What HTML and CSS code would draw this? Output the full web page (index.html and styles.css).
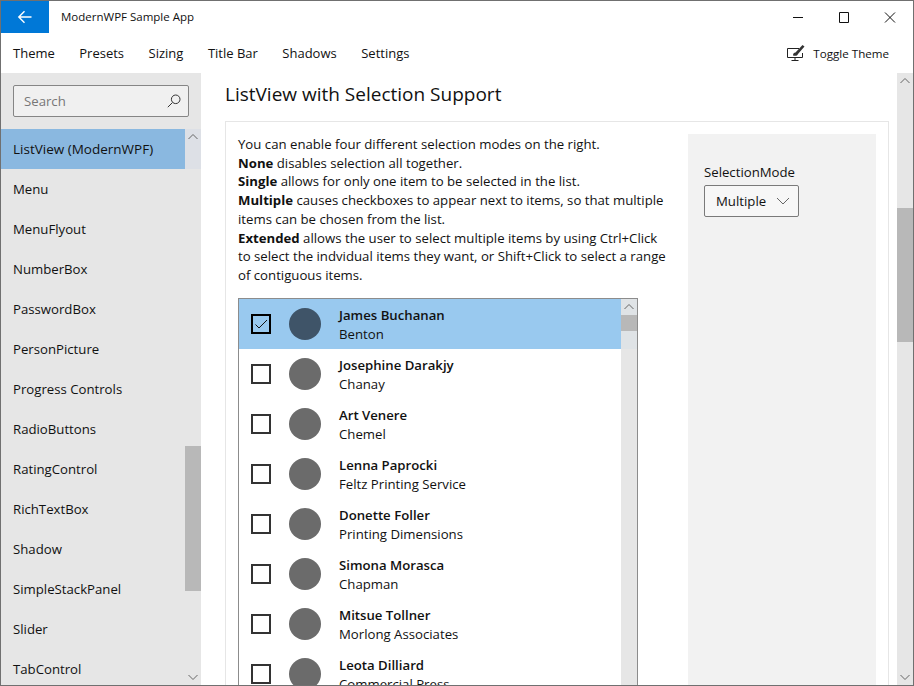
FILE: index.html
```html
<!DOCTYPE html>
<html lang="en">
<head>
    <meta charset="UTF-8">
    <title>ModernWPF Sample App</title>
    <link rel="stylesheet" href="styles.css">
</head>
<body>

<div class="window">
    <div class="titlebar">
        <div class="back-btn">
            <svg width="16" height="16" viewBox="0 0 16 16"><path d="M14.500 8H2M7.500 2.300L1.800 8l5.700 5.700" fill="none" stroke="#fff" stroke-width="1.400"/></svg>
        </div>
        <div class="app-title">ModernWPF Sample App</div>
        <div class="caption-btns">
            <svg class="caption-btn" width="46" height="32" viewBox="0 0 46 32"><path d="M18 16.500h10" stroke="#111" fill="none"/></svg>
            <svg class="caption-btn" width="46" height="32" viewBox="0 0 46 32"><path d="M18.500 11.500h9v10h-9z" stroke="#111" fill="none"/></svg>
            <svg class="caption-btn" width="46" height="32" viewBox="0 0 46 32"><path d="M18 11.500l10 10M28 11.500l-10 10" stroke="#111" fill="none"/></svg>
        </div>
    </div>

    <div class="menubar">
        <span class="menu-item">Theme</span>
        <span class="menu-item">Presets</span>
        <span class="menu-item">Sizing</span>
        <span class="menu-item">Title Bar</span>
        <span class="menu-item">Shadows</span>
        <span class="menu-item">Settings</span>
        <div class="toggle-theme">
            <svg width="20" height="18" viewBox="0 0 20 18"><path d="M13 4.500H1.500v9h15V9M9 13.500v3M5.500 16.500h7" fill="none" stroke="#222"/><path d="M7 11.500c0-2 1-3 2.500-3L16.500 1l2 1.500-6.500 7.500c-.5 2-3 2-5 1.500z" fill="#333"/></svg>
            <span>Toggle Theme</span>
        </div>
    </div>

    <div class="content">
        <div class="sidebar">
            <div class="search-wrap">
                <div class="search-box">
                    <span>Search</span>
                    <svg width="14" height="14" viewBox="0 0 14 14"><circle cx="8.700" cy="5.300" r="4.300" fill="none" stroke="#333"/><path d="M5.500 8.500L.8 13.200" stroke="#333" fill="none"/></svg>
                </div>
            </div>
            <div class="nav-area">
                <div class="nav-list">
                    <div class="nav-item selected">ListView (ModernWPF)</div>
                    <div class="nav-item">Menu</div>
                    <div class="nav-item">MenuFlyout</div>
                    <div class="nav-item">NumberBox</div>
                    <div class="nav-item">PasswordBox</div>
                    <div class="nav-item">PersonPicture</div>
                    <div class="nav-item">Progress Controls</div>
                    <div class="nav-item">RadioButtons</div>
                    <div class="nav-item">RatingControl</div>
                    <div class="nav-item">RichTextBox</div>
                    <div class="nav-item">Shadow</div>
                    <div class="nav-item">SimpleStackPanel</div>
                    <div class="nav-item">Slider</div>
                    <div class="nav-item">TabControl</div>
                </div>
                <div class="scrollbar nav-scroll">
                    <svg class="arrow" width="16" height="16" viewBox="0 0 16 16"><path d="M3.500 10L8 5.500l4.500 4.500" fill="none" stroke="#666"/></svg>
                    <div class="track"><div class="thumb nav-thumb"></div></div>
                    <svg class="arrow" width="16" height="16" viewBox="0 0 16 16"><path d="M3.500 6L8 10.500 12.500 6" fill="none" stroke="#666"/></svg>
                </div>
            </div>
        </div>

        <div class="main">
            <h1 class="page-title">ListView with Selection Support</h1>
            <div class="card">
                <div class="card-left">
                    <p class="intro">
                        You can enable four different selection modes on the right.<br>
                        <b>None</b> disables selection all together.<br>
                        <b>Single</b> allows for only one item to be selected in the list.<br>
                        <b>Multiple</b> causes checkboxes to appear next to items, so that multiple<br>
                        items can be chosen from the list.<br>
                        <b>Extended</b> allows the user to select multiple items by using Ctrl+Click<br>
                        to select the indvidual items they want, or Shift+Click to select a range<br>
                        of contiguous items.
                    </p>
                    <div class="listbox">
                        <div class="rows">
                            <div class="row selected">
                                <div class="check"><svg width="16" height="16" viewBox="0 0 16 16"><path d="M2.500 8.500l3.500 3.500 8-8" fill="none" stroke="#111"/></svg></div>
                                <div class="avatar"></div>
                                <div class="person"><div class="name">James Buchanan</div><div class="company">Benton</div></div>
                            </div>
                            <div class="row">
                                <div class="check"></div><div class="avatar"></div>
                                <div class="person"><div class="name">Josephine Darakjy</div><div class="company">Chanay</div></div>
                            </div>
                            <div class="row">
                                <div class="check"></div><div class="avatar"></div>
                                <div class="person"><div class="name">Art Venere</div><div class="company">Chemel</div></div>
                            </div>
                            <div class="row">
                                <div class="check"></div><div class="avatar"></div>
                                <div class="person"><div class="name">Lenna Paprocki</div><div class="company">Feltz Printing Service</div></div>
                            </div>
                            <div class="row">
                                <div class="check"></div><div class="avatar"></div>
                                <div class="person"><div class="name">Donette Foller</div><div class="company">Printing Dimensions</div></div>
                            </div>
                            <div class="row">
                                <div class="check"></div><div class="avatar"></div>
                                <div class="person"><div class="name">Simona Morasca</div><div class="company">Chapman</div></div>
                            </div>
                            <div class="row">
                                <div class="check"></div><div class="avatar"></div>
                                <div class="person"><div class="name">Mitsue Tollner</div><div class="company">Morlong Associates</div></div>
                            </div>
                            <div class="row">
                                <div class="check"></div><div class="avatar"></div>
                                <div class="person"><div class="name">Leota Dilliard</div><div class="company">Commercial Press</div></div>
                            </div>
                        </div>
                        <div class="scrollbar list-scroll">
                            <svg class="arrow" width="16" height="16" viewBox="0 0 16 16"><path d="M3.500 10L8 5.500l4.500 4.500" fill="none" stroke="#666"/></svg>
                            <div class="track"><div class="thumb list-thumb"></div></div>
                        </div>
                    </div>
                </div>
                <div class="options">
                    <div class="options-label">SelectionMode</div>
                    <div class="combo">
                        <span>Multiple</span>
                        <svg width="14" height="10" viewBox="0 0 14 10"><path d="M1 2l6 6 6-6" fill="none" stroke="#666"/></svg>
                    </div>
                </div>
            </div>
        </div>

        <div class="scrollbar main-scroll">
            <svg class="arrow" width="16" height="16" viewBox="0 0 16 16"><path d="M3.500 10L8 5.500l4.500 4.500" fill="none" stroke="#666"/></svg>
            <div class="track"><div class="thumb main-thumb"></div></div>
            <svg class="arrow" width="16" height="16" viewBox="0 0 16 16"><path d="M3.500 6L8 10.500 12.500 6" fill="none" stroke="#666"/></svg>
        </div>
    </div>
</div>

</body>
</html>
```

FILE: styles.css
```css
* {
    box-sizing: border-box;
}
html, body {
    margin: 0;
    height: 100%;
    overflow: hidden;
}
body {
    font-family: "Open Sans", "Noto Sans", sans-serif;
    font-size: 13.2px;
    color: #111;
    background-color: #fff;
}
.window {
    width: 914px;
    height: 686px;
    border: 1px solid #707070;
    display: flex;
    flex-direction: column;
    overflow: hidden;
}

/* title bar */
.titlebar {
    height: 32px;
    flex: none;
    display: flex;
    align-items: center;
}
.back-btn {
    width: 48px;
    height: 32px;
    background-color: #0078d7;
    display: flex;
    align-items: center;
    justify-content: center;
}
.app-title {
    margin: 0 0 1px 12px;
    font-size: 11.5px;
}
.caption-btns {
    margin-left: auto;
    display: flex;
}
.caption-btn {
    display: block;
}

/* menu */
.menubar {
    height: 40px;
    flex: none;
    display: flex;
    align-items: center;
    padding: 0 24px 0 12px;
    gap: 24.5px;
    font-size: 13px;
}
.toggle-theme {
    margin-left: auto;
    display: flex;
    align-items: center;
    gap: 7px;
    font-size: 11.6px;
}

.content {
    flex: 1;
    min-height: 0;
    display: flex;
}

/* left side */
.sidebar {
    width: 200px;
    flex: none;
    background-color: #e6e6e6;
    display: flex;
    flex-direction: column;
}
.search-wrap {
    padding: 12px;
}
.search-box {
    height: 32px;
    background-color: #f0f0f0;
    border: 1px solid #858585;
    border-radius: 2px;
    padding: 0 7px 0 10px;
    display: flex;
    align-items: center;
    justify-content: space-between;
    color: #777;
}
.nav-area {
    flex: 1;
    min-height: 0;
    display: flex;
}
.nav-list {
    flex: 1;
    overflow: hidden;
}
.nav-item {
    height: 40px;
    line-height: 40px;
    padding-left: 12px;
    white-space: nowrap;
}
.nav-item.selected {
    background-color: #8ab8e0;
    font-size: 13.5px;
}
.scrollbar {
    width: 16px;
    flex: none;
    display: flex;
    flex-direction: column;
}
.arrow {
    display: block;
    flex: none;
}
.track {
    flex: 1;
    min-height: 0;
}
.thumb {
    background-color: #b8b8b8;
}
.nav-scroll {
    background-color: #e6e6e6;
}
.nav-scroll .arrow:first-child {
    background-color: #dde0e6;
}
.nav-scroll .track {
    background: linear-gradient(#dde0e6 0, #dde0e6 24px, #e6e6e6 24px);
}
.nav-thumb {
    height: 145px;
    margin-top: 301px;
}

/* main */
.main {
    flex: 1;
    min-width: 0;
    padding: 0 8px 0 24px;
    overflow: hidden;
}
.page-title {
    font-size: 19px;
    font-weight: 400;
    margin: 7px 0 13px;
    line-height: 28px;
}
.card {
    border: 1px solid #e6e6e6;
    padding: 12px;
    display: flex;
    height: 600px;
}
.card-left {
    width: 450px;
    flex: none;
}
.intro {
    margin: 1px 0 0;
    line-height: 18.7px;
    white-space: nowrap;
}
.listbox {
    width: 400px;
    margin-top: 13px;
    border: 1px solid #8c8c8c;
    display: flex;
    height: 420px;
}
.rows {
    flex: 1;
    min-width: 0;
}
.row {
    height: 50px;
    display: flex;
    align-items: center;
    padding-left: 12px;
}
.row.selected {
    background-color: #99c9ef;
}
.check {
    width: 20px;
    height: 20px;
    border: 2px solid #333;
    flex: none;
    display: flex;
    align-items: center;
    justify-content: center;
}
.row.selected .check {
    border-color: #000;
}
.avatar {
    width: 32px;
    height: 32px;
    border-radius: 50%;
    background-color: #6b6b6b;
    margin-left: 18px;
    flex: none;
}
.row.selected .avatar {
    background-color: #3f5468;
}
.person {
    margin-left: 18px;
    padding-top: 2px;
    line-height: 19px;
}
.name {
    font-weight: 600;
}
.list-scroll {
    background-color: #e6e6e6;
}
.list-scroll .arrow {
    background-color: #dfe3e6;
}
.list-scroll .track {
    background: linear-gradient(#dfe3e6 0, #dfe3e6 34px, #e6e6e6 34px);
}
.list-thumb {
    height: 16px;
}

/* options pane */
.options {
    width: 188px;
    margin-left: auto;
    background-color: #f2f2f2;
    padding: 28px 16px;
}
.options-label {
    line-height: 20px;
}
.combo {
    width: 95px;
    height: 32px;
    margin-top: 3px;
    border: 1px solid #7a7a7a;
    border-radius: 2px;
    background-color: #f7f7f7;
    padding: 0 8px 0 11px;
    display: flex;
    align-items: center;
    justify-content: space-between;
}

.main-scroll {
    background-color: #e6e6e6;
}
.main-thumb {
    height: 134px;
    margin-top: 119px;
}
```
